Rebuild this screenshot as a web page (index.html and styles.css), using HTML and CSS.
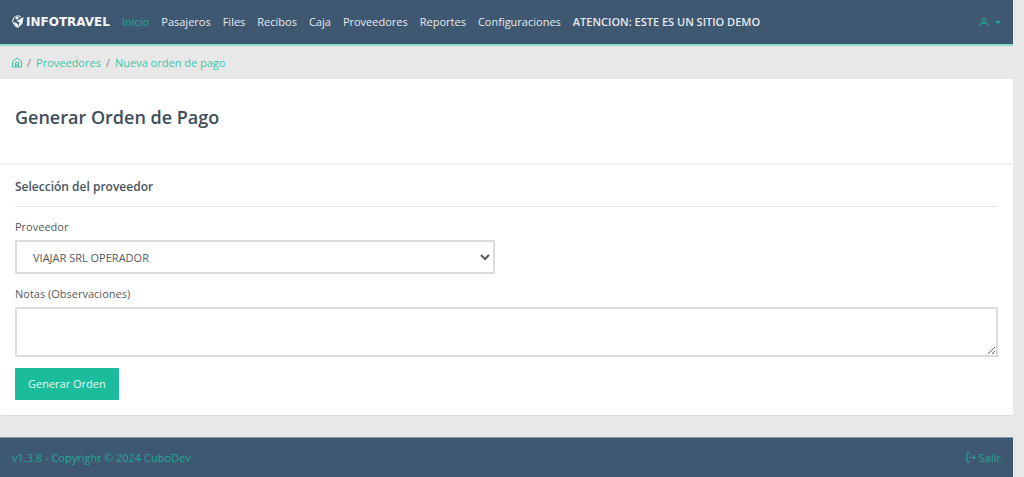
FILE: index.html
```html
<!DOCTYPE html>
<html lang="es">
<head>
    <meta charset="UTF-8">
    <meta name="viewport" content="width=device-width, initial-scale=1.0">
    <title>Infotravel - Generar Orden de Pago</title>
    <link rel="stylesheet" href="styles.css">
</head>
<body>
    <header class="navbar">
        <a class="brand" href="#">
            <svg class="brand-icon" viewBox="0 0 24 28" aria-hidden="true">
                <path d="M10 25C4 20 1.500 16 1.500 11.500A10 10 0 0 1 18 4" fill="none" stroke="currentColor" stroke-width="2"/>
                <path d="M3 14l6 2 3 3 1 7-6-4z" fill="currentColor"/>
                <path d="M7 5l5-2 2 3-4 3-3-1z" fill="currentColor"/>
                <path d="M9 12L23 4 21 17 12 26 15 15z" fill="currentColor"/>
            </svg>
            <span>INFOTRAVEL</span>
        </a>
        <nav class="menu">
            <a class="active" href="#">Inicio</a>
            <a href="#">Pasajeros</a>
            <a href="#">Files</a>
            <a href="#">Recibos</a>
            <a href="#">Caja</a>
            <a href="#">Proveedores</a>
            <a href="#">Reportes</a>
            <a href="#">Configuraciones</a>
            <a class="notice" href="#">ATENCION: ESTE ES UN SITIO DEMO</a>
        </nav>
        <button class="user-menu" type="button" aria-label="Usuario">
            <svg class="user-icon" viewBox="0 0 10 10" aria-hidden="true">
                <circle cx="5" cy="3" r="2"/>
                <path d="M1 9.500V8.500Q1 6.500 3 6.500H7Q9 6.500 9 8.500V9.500"/>
            </svg>
            <span class="caret"></span>
        </button>
    </header>

    <nav class="breadcrumb" aria-label="Ruta">
        <a href="#" aria-label="Inicio">
            <svg class="home-icon" viewBox="0 0 10 11" aria-hidden="true">
                <path d="M.500 4.500L5 1 9.500 4.500V10H.500zM3.500 10V5.500H6.500V10M5 7V10"/>
            </svg>
        </a>
        <span class="separator">/</span>
        <a href="#">Proveedores</a>
        <span class="separator">/</span>
        <a href="#">Nueva orden de pago</a>
    </nav>

    <main class="card">
        <div class="card-header">
            <h1>Generar Orden de Pago</h1>
        </div>
        <form class="card-body">
            <h2>Selección del proveedor</h2>
            <label for="proveedor">Proveedor</label>
            <select id="proveedor">
                <option>VIAJAR SRL OPERADOR</option>
            </select>
            <label for="notas">Notas (Observaciones)</label>
            <textarea id="notas"></textarea>
            <button class="btn" type="button">Generar Orden</button>
        </form>
    </main>

    <footer class="footer">
        <a href="#">v1.3.8 - Copyright © 2024 CuboDev</a>
        <a class="logout" href="#">
            <svg class="logout-icon" viewBox="0 0 10 11" aria-hidden="true">
                <path d="M4 1H1V10H4M3.500 5.500H9M7 3.500L9 5.500 7 7.500"/>
            </svg>
            <span>Salir</span>
        </a>
    </footer>
</body>
</html>
```

FILE: styles.css
```css
* {
    box-sizing: border-box;
}
body {
    margin: 0;
    padding-right: 11px;
    background-color: #e8e8e8;
    color: #55595c;
    font-family: "Open Sans", "Noto Sans", sans-serif;
    font-size: 11px;
    line-height: 16px;
}
a {
    color: #1bbc9b;
    text-decoration: none;
}
svg {
    display: block;
    fill: none;
    stroke: currentColor;
}
.navbar {
    display: flex;
    align-items: center;
    height: 46px;
    padding: 0 12px;
    background-color: #3f5871;
    border-bottom: 2px solid #8adcc8;
}
.brand {
    display: flex;
    align-items: center;
    gap: 2px;
    width: 110px;
    color: #f4f6f8;
    font-family: "DejaVu Sans", sans-serif;
    font-size: 12px;
    font-weight: bold;
}
.brand-icon {
    width: 12px;
    height: 14px;
    stroke: none;
}
.menu {
    display: flex;
    flex: 1;
    gap: 12px;
    white-space: nowrap;
}
.menu a {
    color: #e6eaee;
}
.menu .active {
    color: #23a898;
}
.menu .notice {
    font-weight: 600;
}
.user-menu {
    display: flex;
    align-items: center;
    gap: 6px;
    padding: 0;
    border: none;
    background: none;
    color: #1fae98;
}
.user-icon {
    width: 10px;
    height: 10px;
}
.caret {
    border: 3px solid transparent;
    border-top-color: currentColor;
    border-bottom: none;
}
.breadcrumb {
    display: flex;
    align-items: center;
    gap: 5px;
    height: 33px;
    padding: 0 12px;
}
.breadcrumb a {
    color: #3cc4a6;
}
.home-icon {
    width: 10px;
    height: 11px;
}
.separator {
    color: #818a91;
}
.card {
    background-color: #fff;
    border-bottom: 1px solid #dcdcdc;
    border-radius: 0 0 2px 2px;
}
.card-header {
    padding: 26px 15px 34px;
    border-bottom: 2px solid #f0f0f0;
}
h1 {
    margin: 0;
    color: #3e4e59;
    font-size: 18px;
    font-weight: 600;
    line-height: 24px;
}
.card-body {
    display: flex;
    flex-direction: column;
    align-items: flex-start;
    padding: 14px 15px 15px;
}
h2 {
    width: 100%;
    margin: 0 0 12px;
    padding-bottom: 11px;
    border-bottom: 1px solid #e5e5e5;
    color: #46545f;
    font-size: 12px;
    font-weight: 600;
    line-height: 16px;
}
label {
    margin-bottom: 5px;
}
select,
textarea {
    border: 2px solid #dcdcdc;
    background-color: #fff;
    color: #55595c;
    font: inherit;
}
select {
    width: 480px;
    max-width: 100%;
    height: 34px;
    margin-bottom: 12px;
    padding: 0 0 0 12px;
}
textarea {
    width: 100%;
    height: 50px;
    margin-bottom: 11px;
    padding: 6px 16px;
    resize: vertical;
}
.btn {
    padding: 8px 13px;
    border: none;
    border-radius: 1px;
    background-color: #1bbc9b;
    color: #e6f8f4;
    font: inherit;
}
.footer {
    display: flex;
    align-items: center;
    justify-content: space-between;
    height: 40px;
    margin-top: 21px;
    padding: 0 12px;
    background-color: #3f5871;
    border-top: 1px solid #8795a3;
}
.footer a {
    color: #23a898;
}
.logout {
    display: flex;
    align-items: center;
    gap: 3px;
}
.logout-icon {
    width: 10px;
    height: 11px;
}
```
